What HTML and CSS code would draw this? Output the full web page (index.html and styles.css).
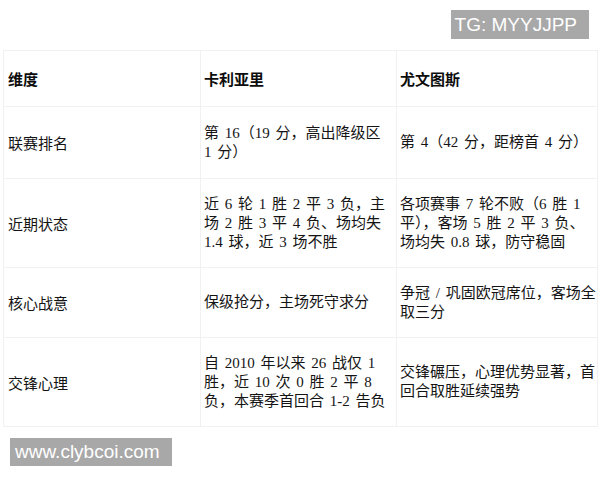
FILE: index.html
```html
<!DOCTYPE html>
<html lang="zh-CN">
<head>
<meta charset="utf-8">
<link rel="stylesheet" href="styles.css">
</head>
<body>
<div class="page">
  <div class="topbar"><span class="tag">TG: MYYJJPP</span></div>
  <table class="cmp">
    <colgroup><col class="c1"><col class="c2"><col class="c3"></colgroup>
    <thead>
      <tr><th class="lbl">维度</th><th class="mid">卡利亚里</th><th class="end">尤文图斯</th></tr>
    </thead>
    <tbody>
      <tr class="first"><td class="lbl">联赛排名</td><td class="mid">第 16（19 分，高出降级区 1 分）</td><td class="end">第 4（42 分，距榜首 4 分）</td></tr>
      <tr><td class="lbl">近期状态</td><td class="mid">近 6 轮 1 胜 2 平 3 负，主场 2 胜 3 平 4 负、场均失 1.4 球，近 3 场不胜</td><td class="end">各项赛事 7 轮不败（6 胜 1 平），客场 5 胜 2 平 3 负、场均失 0.8 球，防守稳固</td></tr>
      <tr><td class="lbl">核心战意</td><td class="mid">保级抢分，主场死守求分</td><td class="end">争冠 / 巩固欧冠席位，客场全取三分</td></tr>
      <tr><td class="lbl">交锋心理</td><td class="mid">自 2010 年以来 26 战仅 1 胜，近 10 次 0 胜 2 平 8 负，本赛季首回合 1-2 告负</td><td class="end">交锋碾压，心理优势显著，首回合取胜延续强势</td></tr>
    </tbody>
  </table>
  <div class="foot"><span class="tag site">www.clybcoi.com</span></div>
</div>
</body>
</html>
```

FILE: styles.css
```css
* { box-sizing: border-box; }
html, body { margin: 0; padding: 0; background: #ffffff; }
.page { width: 600px; height: 480px; overflow: hidden; }
.topbar {
  height: 50px;
  display: flex;
  justify-content: flex-end;
  align-items: flex-start;
  padding: 10px 11px 0 0;
}
.tag {
  display: inline-block;
  background: #a8a8a8;
  color: #ffffff;
  font-family: "Liberation Sans", Arial, sans-serif;
  font-size: 19px;
  line-height: 29px;
  height: 29px;
  padding: 0 12px 0 4px;
}
.cmp {
  margin-left: 3px;
  width: 594px;
  table-layout: fixed;
  border-collapse: collapse;
  color: #141414;
}
.cmp col.c1 { width: 197px; }
.cmp col.c2 { width: 196px; }
.cmp col.c3 { width: 201px; }
.cmp th, .cmp td {
  border: 1px solid #f1f1f1;
  vertical-align: middle;
  text-align: left;
  padding: 15.5px 2px 15.5px 3px;
  line-height: 19px;
  font-size: 15px;
}
.cmp tr.first td { padding-top: 16.5px; padding-bottom: 16.5px; }
.cmp .lbl { padding-left: 4px; }
.cmp .mid { padding-right: 8px; }
.cmp .end { padding-right: 1px; }
.cmp th {
  font-family: "Noto Sans CJK SC", sans-serif;
  font-weight: bold;
  padding-top: 18px;
  padding-bottom: 18px;
  color: #0d0d0d;
}
.cmp td {
  font-family: "Liberation Serif", "Noto Sans CJK SC", serif;
  word-spacing: 2px;
}
.cmp td.lbl {
  font-family: "Noto Sans CJK SC", sans-serif;
}
.foot { padding: 11px 0 0 10px; }
.site { height: 28px; line-height: 28px; padding: 0 12px 0 5px; }
```
